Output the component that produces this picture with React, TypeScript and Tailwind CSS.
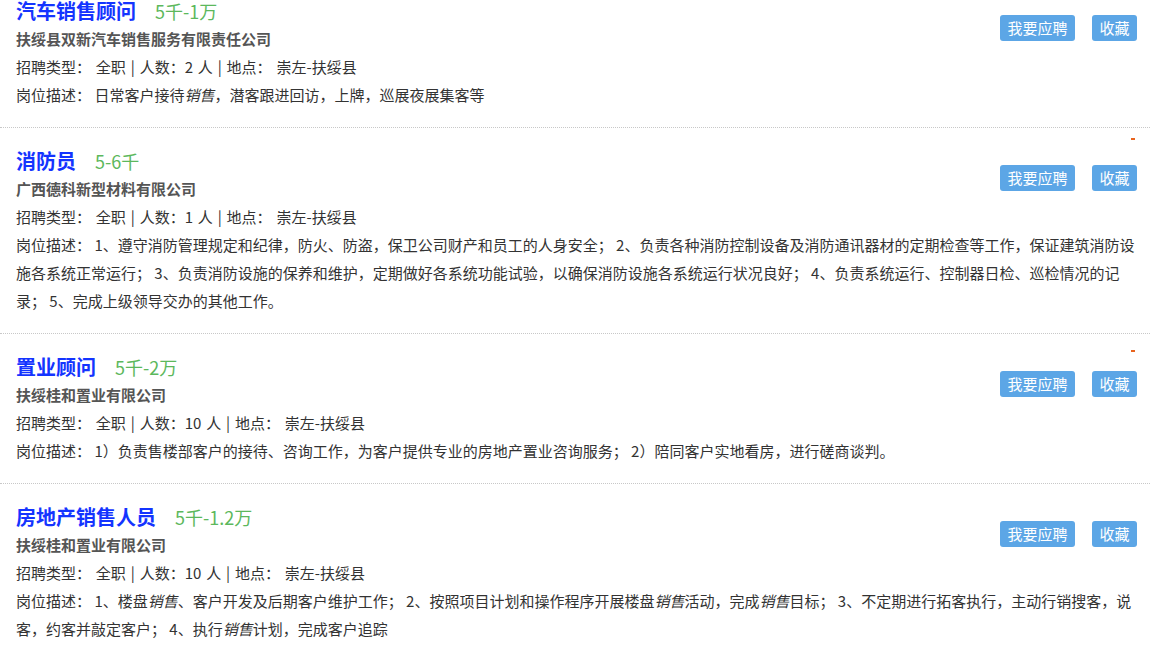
import React from "react";

type Job = {
  title: string;
  salary: string;
  company: string;
  count: string;
  desc: React.ReactNode;
  mark?: string;
};

const jobs: Job[] = [
  {
    title: "汽车销售顾问",
    salary: "5千-1万",
    company: "扶绥县双新汽车销售服务有限责任公司",
    count: "2",
    desc: (
      <>
        日常客户接待<em>销售</em>，潜客跟进回访，上牌，巡展夜展集客等
      </>
    ),
  },
  {
    title: "消防员",
    salary: "5-6千",
    company: "广西德科新型材料有限公司",
    count: "1",
    mark: "top-[10px]",
    desc: "1、遵守消防管理规定和纪律，防火、防盗，保卫公司财产和员工的人身安全； 2、负责各种消防控制设备及消防通讯器材的定期检查等工作，保证建筑消防设施各系统正常运行； 3、负责消防设施的保养和维护，定期做好各系统功能试验，以确保消防设施各系统运行状况良好； 4、负责系统运行、控制器日检、巡检情况的记录； 5、完成上级领导交办的其他工作。",
  },
  {
    title: "置业顾问",
    salary: "5千-2万",
    company: "扶绥桂和置业有限公司",
    count: "10",
    mark: "top-[16px]",
    desc: "1）负责售楼部客户的接待、咨询工作，为客户提供专业的房地产置业咨询服务； 2）陪同客户实地看房，进行磋商谈判。",
  },
  {
    title: "房地产销售人员",
    salary: "5千-1.2万",
    company: "扶绥桂和置业有限公司",
    count: "10",
    desc: (
      <>
        1、楼盘<em>销售</em>、客户开发及后期客户维护工作； 2、按照项目计划和操作程序开展楼盘<em>销售</em>活动，完成<em>销售</em>目标； 3、不定期进行拓客执行，主动行销搜客，说客，约客并敲定客户； 4、执行<em>销售</em>计划，完成客户追踪
      </>
    ),
  },
];

function JobItem({ job, first }: { job: Job; first?: boolean }) {
  return (
    <div
      className={`relative border-b border-dotted border-[#c8c8c8] pl-[16px] pr-[8px] pt-[19px] pb-[18px] ${
        first ? "-mt-[22px]" : ""
      }`}
    >
      <div className="flex items-baseline leading-[28px]">
        <span className="text-[20px] font-bold text-[#1434ff]">{job.title}</span>
        <span className="ml-[19px] text-[18px] text-[#5cb85c]">{job.salary}</span>
      </div>
      <div className="text-[15px] font-bold leading-[28px] text-[#555]">{job.company}</div>
      <div className="text-[15px] leading-[28px] text-[#333] [word-spacing:1.5px]">
        招聘类型： 全职 | 人数：{job.count} 人 | 地点：  崇左-扶绥县
      </div>
      <div className="text-[15px] leading-[28px] text-[#333]">
        岗位描述： {job.desc}
      </div>
      <div className="absolute right-[13px] top-[37px] flex gap-[17px]">
        <button className="h-[26px] w-[75px] rounded-[3px] bg-[#5ca6e6] text-[15px] text-white">
          我要应聘
        </button>
        <button className="h-[26px] w-[45px] rounded-[3px] bg-[#5ca6e6] text-[15px] text-white">
          收藏
        </button>
      </div>
      {job.mark && (
        <span className={`absolute right-[15px] h-[2px] w-[4px] bg-[#e8641e] ${job.mark}`} />
      )}
    </div>
  );
}

export default function App() {
  return (
    <div
      className="h-[645px] w-[1161px] overflow-hidden bg-white"
      style={{ fontFamily: '"Noto Sans CJK SC", "Noto Sans", sans-serif' }}
    >
      <div className="w-[1150px]">
        {jobs.map((job, i) => (
          <JobItem key={job.title} job={job} first={i === 0} />
        ))}
      </div>
    </div>
  );
}
